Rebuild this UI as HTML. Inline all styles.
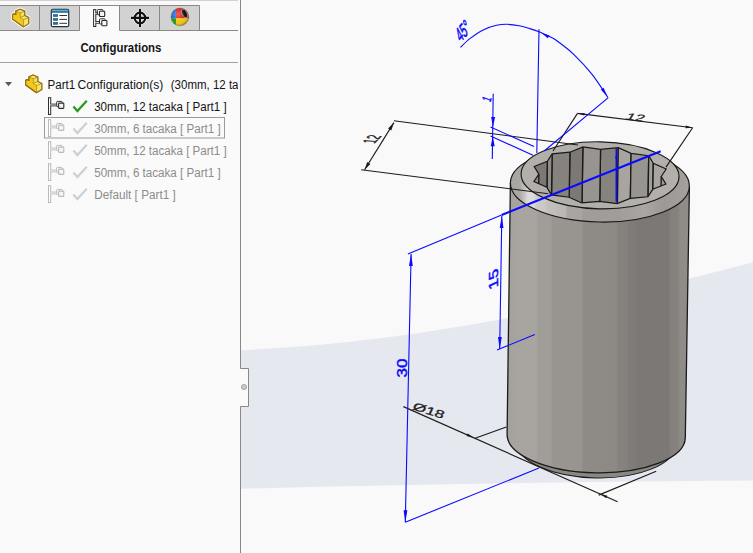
<!DOCTYPE html>
<html>
<head>
<meta charset="utf-8">
<title>Configurations</title>
<style>
html,body{margin:0;padding:0;width:753px;height:553px;overflow:hidden;background:#f9f9f9;}
body{position:relative;font-family:"Liberation Sans",sans-serif;}
#vp{position:absolute;left:0;top:0;width:753px;height:553px;}
#panel{position:absolute;left:0;top:0;width:240px;height:553px;background:#fafafa;}
#ui{position:absolute;left:0;top:0;width:753px;height:553px;}
text{font-family:"Liberation Sans",sans-serif;}
</style>
</head>
<body>
<!-- 3D viewport -->
<svg id="vp" width="753" height="553" viewBox="0 0 753 553">
  <defs>
    <linearGradient id="body" x1="507" y1="0" x2="689" y2="0" gradientUnits="userSpaceOnUse">
      <stop offset="0" stop-color="#a4a19d"/>
      <stop offset="0.03" stop-color="#a6a39f"/>
      <stop offset="0.08" stop-color="#a8a5a1"/>
      <stop offset="0.16" stop-color="#a8a5a1"/>
      <stop offset="0.17" stop-color="#a19e9a"/>
      <stop offset="0.24" stop-color="#a09d99"/>
      <stop offset="0.25" stop-color="#999692"/>
      <stop offset="0.41" stop-color="#989591"/>
      <stop offset="0.42" stop-color="#8f8c88"/>
      <stop offset="0.60" stop-color="#8d8a86"/>
      <stop offset="0.61" stop-color="#86837f"/>
      <stop offset="0.66" stop-color="#85827e"/>
      <stop offset="0.67" stop-color="#807d79"/>
      <stop offset="0.70" stop-color="#7f7c78"/>
      <stop offset="0.71" stop-color="#7b7875"/>
      <stop offset="0.89" stop-color="#7b7875"/>
      <stop offset="0.90" stop-color="#84817d"/>
      <stop offset="0.94" stop-color="#85827e"/>
      <stop offset="0.95" stop-color="#8f8c88"/>
      <stop offset="1" stop-color="#908d89"/>
    </linearGradient>
    <linearGradient id="chamfer" x1="510.5" y1="0" x2="689.5" y2="0" gradientUnits="userSpaceOnUse">
      <stop offset="0" stop-color="#a9a6a2"/>
      <stop offset="0.05" stop-color="#aaa7a3"/>
      <stop offset="0.075" stop-color="#c0bebb"/>
      <stop offset="0.10" stop-color="#dcdcdb"/>
      <stop offset="0.13" stop-color="#dcdcdb"/>
      <stop offset="0.15" stop-color="#cbcbcb"/>
      <stop offset="0.20" stop-color="#c8c8c7"/>
      <stop offset="0.21" stop-color="#c3c0bc"/>
      <stop offset="0.26" stop-color="#c1beba"/>
      <stop offset="0.27" stop-color="#bdbab6"/>
      <stop offset="0.31" stop-color="#bbb8b4"/>
      <stop offset="0.32" stop-color="#aaa7a3"/>
      <stop offset="0.40" stop-color="#a8a5a1"/>
      <stop offset="0.41" stop-color="#a19e9a"/>
      <stop offset="0.60" stop-color="#a09d99"/>
      <stop offset="0.75" stop-color="#aaa7a3"/>
      <stop offset="0.86" stop-color="#9d9a96"/>
      <stop offset="1" stop-color="#a5a29e"/>
    </linearGradient>
  </defs>
  <rect x="0" y="0" width="753" height="553" fill="#f9f9f9"/>
  <!-- floor band -->
  <path d="M241 350.2 C411.7 342.9 582.3 307.0 753 262.2 L753 480.5 Q520 482 241 488.7 Z" fill="#e6e8f0"/>
  <g id="model">
<ellipse cx="596.2" cy="443.5" rx="79.5" ry="34.4" transform="rotate(1.1 596.2 443.5)" fill="#8b8884" stroke="#1a1a1a" stroke-width="1"/>
<path d="M510.4 182.8 L507.1 434.3 A89.1 36.8 1.1 0 0 685.3 437.7 L689.4 186.2 A89.5 37.5 1.1 0 0 510.4 182.8 Z" fill="url(#body)"/>
<path d="M510.4 182.8 L507.1 434.3 A89.1 36.8 1.1 0 0 685.3 437.7 L689.4 186.2" fill="none" stroke="#1a1a1a" stroke-width="1.3"/>
<g transform="rotate(1.1 600 178)">
<ellipse cx="600.0" cy="184.5" rx="89.5" ry="37.5" fill="url(#chamfer)" stroke="#1a1a1a" stroke-width="1.2"/>
<ellipse cx="600.0" cy="175.3" rx="79.0" ry="33.5" fill="#b3b0ac" stroke="#1a1a1a" stroke-width="1.2"/>
<clipPath id="starclip"><polygon points="661.2,175.3 666.0,167.8 653.0,162.3 648.3,154.8 630.6,152.8 617.7,147.3 600.0,149.3 582.3,147.3 569.4,152.8 551.7,154.8 547.0,162.3 534.0,167.8 538.8,175.3 534.0,182.8 547.0,188.3 551.7,195.8 569.4,197.8 582.3,203.3 600.0,201.3 617.7,203.3 630.6,197.8 648.3,195.8 653.0,188.3 666.0,182.8"/></clipPath>
<polygon points="661.2,175.3 666.0,167.8 653.0,162.3 648.3,154.8 630.6,152.8 617.7,147.3 600.0,149.3 582.3,147.3 569.4,152.8 551.7,154.8 547.0,162.3 534.0,167.8 538.8,175.3 534.0,182.8 547.0,188.3 551.7,195.8 569.4,197.8 582.3,203.3 600.0,201.3 617.7,203.3 630.6,197.8 648.3,195.8 653.0,188.3 666.0,182.8" fill="#7c7976"/>
<g clip-path="url(#starclip)">
<polygon points="617.7,147.3 600.0,149.3 600.3,229.3 618.0,227.3" fill="#86837f"/>
<path d="M617.7 147.3 l0.3 80 M600.0 149.3 l0.3 80" stroke="#1a1a1a" stroke-width="1.35" fill="none"/>
<polygon points="600.0,149.3 582.3,147.3 582.6,227.3 600.3,229.3" fill="#989591"/>
<path d="M600.0 149.3 l0.3 80 M582.3 147.3 l0.3 80" stroke="#1a1a1a" stroke-width="1.35" fill="none"/>
<polygon points="630.6,152.8 617.7,147.3 618.0,227.3 630.9,232.8" fill="#a8a5a1"/>
<path d="M630.6 152.8 l0.3 80 M617.7 147.3 l0.3 80" stroke="#1a1a1a" stroke-width="1.35" fill="none"/>
<polygon points="582.3,147.3 569.4,152.8 569.7,232.8 582.6,227.3" fill="#7b7875"/>
<path d="M582.3 147.3 l0.3 80 M569.4 152.8 l0.3 80" stroke="#1a1a1a" stroke-width="1.35" fill="none"/>
<polygon points="648.3,154.8 630.6,152.8 630.9,232.8 648.6,234.8" fill="#989591"/>
<path d="M648.3 154.8 l0.3 80 M630.6 152.8 l0.3 80" stroke="#1a1a1a" stroke-width="1.35" fill="none"/>
<polygon points="569.4,152.8 551.7,154.8 552.0,234.8 569.7,232.8" fill="#86837f"/>
<path d="M569.4 152.8 l0.3 80 M551.7 154.8 l0.3 80" stroke="#1a1a1a" stroke-width="1.35" fill="none"/>
<polygon points="653.0,162.3 648.3,154.8 648.6,234.8 653.3,242.3" fill="#a29f9b"/>
<path d="M653.0 162.3 l0.3 80 M648.3 154.8 l0.3 80" stroke="#1a1a1a" stroke-width="1.35" fill="none"/>
<polygon points="551.7,154.8 547.0,162.3 547.3,242.3 552.0,234.8" fill="#908d89"/>
<path d="M551.7 154.8 l0.3 80 M547.0 162.3 l0.3 80" stroke="#1a1a1a" stroke-width="1.35" fill="none"/>
<polygon points="666.0,167.8 653.0,162.3 653.3,242.3 666.3,247.8" fill="#a8a5a1"/>
<path d="M666.0 167.8 l0.3 80 M653.0 162.3 l0.3 80" stroke="#1a1a1a" stroke-width="1.35" fill="none"/>
<polygon points="547.0,162.3 534.0,167.8 534.3,247.8 547.3,242.3" fill="#7b7875"/>
<path d="M547.0 162.3 l0.3 80 M534.0 167.8 l0.3 80" stroke="#1a1a1a" stroke-width="1.35" fill="none"/>
<polygon points="538.8,175.3 534.0,182.8 534.3,262.8 539.1,255.3" fill="#8f8c88"/>
<path d="M538.8 175.3 l0.3 80 M534.0 182.8 l0.3 80" stroke="#1a1a1a" stroke-width="1.35" fill="none"/>
<polygon points="666.0,182.8 661.2,175.3 661.5,255.3 666.3,262.8" fill="#a29f9b"/>
<path d="M666.0 182.8 l0.3 80 M661.2 175.3 l0.3 80" stroke="#1a1a1a" stroke-width="1.35" fill="none"/>
</g>
<polygon points="661.2,175.3 666.0,167.8 653.0,162.3 648.3,154.8 630.6,152.8 617.7,147.3 600.0,149.3 582.3,147.3 569.4,152.8 551.7,154.8 547.0,162.3 534.0,167.8 538.8,175.3 534.0,182.8 547.0,188.3 551.7,195.8 569.4,197.8 582.3,203.3 600.0,201.3 617.7,203.3 630.6,197.8 648.3,195.8 653.0,188.3 666.0,182.8" fill="none" stroke="#1a1a1a" stroke-width="1.2" stroke-linejoin="miter"/>
</g>
  </g>
  <g id="dims">
<g fill="none" stroke="#1c1c1c" stroke-width="1.15">
<path d="M393.9 120.7 L578 145"/>
<path d="M361.2 169.7 L548.3 193.7"/>
<path d="M393.9 122.6 L364.6 169.7"/>
<path d="M577.5 113.4 L553 151"/>
<path d="M577.5 113.4 L692.6 127.8"/>
<path d="M692.6 127.8 L666 167.1"/>
<path d="M403.4 406.6 L617.6 501.7"/>
<path d="M474.4 438.5 L506.3 427"/>
<path d="M598.7 495.1 L656.2 471.2"/>
</g>
<polygon points="393.9,122.6 391.3,130.4 388.1,128.4" fill="#1c1c1c"/>
<polygon points="364.6,169.7 367.2,161.9 370.4,163.9" fill="#1c1c1c"/>
<polygon points="577.5,113.4 584.6,113.0 584.3,115.6" fill="#1c1c1c"/>
<polygon points="692.6,127.8 685.5,128.2 685.8,125.6" fill="#1c1c1c"/>
<polygon points="474.4,438.0 466.5,436.0 467.6,433.5" fill="#1c1c1c"/>
<polygon points="599.5,493.7 607.4,495.7 606.3,498.2" fill="#1c1c1c"/>
<g fill="none" stroke="#0a0aff" stroke-width="1.1">
<path d="M460.4 47.4 C462.0 45.9 466.1 41.5 469.9 38.6 C473.7 35.7 478.8 32.1 483.2 29.9 C487.6 27.7 492.5 26.2 496.5 25.3 C500.5 24.4 503.3 24.2 507.1 24.3 C510.9 24.4 515.3 25.0 519.1 25.7 C522.9 26.4 526.4 27.6 529.7 28.6 C533.0 29.6 535.7 30.5 539.0 31.8 C542.3 33.1 546.7 35.2 549.6 36.6 C552.5 38.0 552.1 37.3 556.2 40.3 C560.3 43.3 568.2 49.1 574.2 54.8 C580.2 60.5 586.6 67.5 592.3 74.7 C597.9 81.9 605.5 94.0 608.1 97.8"/>
<path d="M539 29.3 L536.8 153"/>
<path d="M608 97.8 L544.2 151"/>
<path d="M493.2 93.8 L492.3 159"/>
<path d="M490.5 127 L534 146.5"/>
<path d="M490.5 136 L533 155.2"/>
<path d="M407.9 254 L501.6 215"/>
<path d="M616.3 148.5 L616.3 201.7" stroke-width="1.5"/>
<path d="M411.1 254 L405.3 522.2"/>
<path d="M501.8 216 L499.7 349"/>
<path d="M497 350 L534.8 334.5"/>
<path d="M405.3 522.2 L539 468"/>
</g>
<path d="M501.6 215 L660.7 151.2" fill="none" stroke="#0a0aff" stroke-width="2.15"/>
<polygon points="541.5,33.0 549.3,35.4 547.8,38.2" fill="#0a0aff"/>
<polygon points="607.6,97.0 600.8,89.5 603.6,87.7" fill="#0a0aff"/>
<polygon points="493.0,127.0 491.1,117.0 495.1,117.0" fill="#0a0aff"/>
<polygon points="492.8,136.3 494.7,146.3 490.7,146.3" fill="#0a0aff"/>
<polygon points="411.1,254.0 412.8,266.0 409.0,266.0" fill="#0a0aff"/>
<polygon points="405.3,522.2 403.6,510.2 407.4,510.2" fill="#0a0aff"/>
<polygon points="501.8,216.0 503.5,228.0 499.7,228.0" fill="#0a0aff"/>
<polygon points="499.7,349.0 498.0,337.0 501.8,337.0" fill="#0a0aff"/>
<polygon points="616.3,153.0 617.4,159.0 615.2,159.0" fill="#0a0aff"/>
<text transform="matrix(0.54,-0.645,0.67,1.27,460.5,42.8)" font-size="13" fill="#0a0aff" stroke="#0a0aff" stroke-width="0.45">45°</text>
<text transform="matrix(0.2,-0.6,1.01,0.37,490.3,102.5)" font-size="12" fill="#0a0aff" stroke="#0a0aff" stroke-width="0.45">1</text>
<text transform="matrix(0.555,-0.6,1.53,0.14,374.6,143.8)" font-size="12" fill="#1c1c1c" stroke="#1c1c1c" stroke-width="0.28">12</text>
<text transform="matrix(0.992,0.124,-0.46,0.76,624.8,119.3)" font-size="12" fill="#1c1c1c" stroke="#1c1c1c" stroke-width="0.28" textLength="18" lengthAdjust="spacingAndGlyphs">12</text>
<text transform="matrix(0,-1,1,0,407.1,377.5)" font-size="14" fill="#0a0aff" stroke="#0a0aff" stroke-width="0.45" textLength="18.8" lengthAdjust="spacingAndGlyphs">30</text>
<text transform="matrix(0,-1.26,0.94,-0.43,497.6,287)" font-size="14" fill="#0a0aff" stroke="#0a0aff" stroke-width="0.45">15</text>
<text transform="matrix(0.95,0.30,-0.38,0.85,411.8,409.2)" font-size="12" fill="#1c1c1c" stroke="#1c1c1c" stroke-width="0.28" textLength="32.5" lengthAdjust="spacingAndGlyphs">Ø18</text>
  </g>
</svg>

<!-- left panel -->
<div id="panel"></div>
<svg id="ui" width="753" height="553" viewBox="0 0 753 553">
<rect x="0" y="0" width="238" height="1" fill="#d2d2d2"/>
<rect x="0" y="5.5" width="79.5" height="25" fill="#d2d2d2"/>
<rect x="119.5" y="5.5" width="80" height="25" fill="#d2d2d2"/>
<g fill="none" stroke="#8b8784" stroke-width="1">
<path d="M0 5.5 H199.5 V30.5"/>
<path d="M0 30.5 H79.5 M119.5 30.5 H238"/>
<path d="M39.5 5.5 V30.5 M79.5 5.5 V30.5 M119.5 5.5 V30.5 M159.5 5.5 V30.5"/>
</g>
<rect x="0" y="62" width="238" height="1" fill="#a3a09e"/>
<path d="M240.5 0 V368.5 H248.5 V406.5 H240.5 V553" fill="none" stroke="#8b8784" stroke-width="1"/>
<rect x="241" y="369" width="7" height="37" fill="#fafafa"/>
<circle cx="244" cy="387" r="2.6" fill="#c9c9c9" stroke="#9a9a9a" stroke-width="0.8"/>
<defs>
<g id="part">
<path d="M15.8 10.9 L20 9.2 L24.7 11.1 V15.6 L28.7 17.5 V23.6 L23.3 26.9 L12.5 19.1 V14.4 L14.1 13.7 L15.8 14.5 Z" fill="#ffffff" stroke="#ffffff" stroke-width="3.2" stroke-linejoin="round" opacity="0.85"/>
<path d="M15.8 10.9 L20 9.2 L24.7 11.1 V15.6 L28.7 17.5 V23.6 L23.3 26.9 L12.5 19.1 V14.4 L14.1 13.7 L15.8 14.5 Z" fill="#f2c81e" stroke="#94700f" stroke-width="1.1" stroke-linejoin="round"/>
<path d="M15.8 10.9 L20 9.2 L24.7 11.1 L20.2 12.9 Z" fill="#f8e577"/>
<path d="M20.2 12.9 L24.7 11.1 V15.6 L20.2 17.6 Z" fill="#f5df5c"/>
<path d="M20.2 17.6 L24.7 15.6 L28.7 17.5 L23.6 19.7 Z" fill="#f6e36c"/>
<path d="M23.6 19.7 L28.7 17.5 V23.6 L23.4 26.8 Z" fill="#f7e569"/>
<path d="M15.8 10.9 L20.2 12.9 V17.6 L23.6 19.7 L23.4 26.6 M20.2 12.9 L24.7 11.1 M23.6 19.7 L28.7 17.5 M20.2 17.6 L24.7 15.6" fill="none" stroke="#a8820f" stroke-width="0.7"/>
<path d="M15.8 10.9 L20 9.2 L24.7 11.1 V15.6 L28.7 17.5 V23.6 L23.3 26.9 L12.5 19.1 V14.4 L14.1 13.7 L15.8 14.5 Z" fill="none" stroke="#94700f" stroke-width="1.1" stroke-linejoin="round"/>
</g>
<g id="cfg">
<rect x="48.5" y="97.7" width="2.2" height="16.8" fill="#ffffff" stroke-width="1"/>
<path d="M50.7 104.1 H57 M50.7 105.9 H58.5" fill="none" stroke-width="0.9"/>
<rect x="50.1" y="104.6" width="1.4" height="0.8" fill="#ffffff" stroke="none"/>
<rect x="56.7" y="101.4" width="5.4" height="5.2" rx="0.7" fill="#ffffff" stroke-width="1"/>
<rect x="58.6" y="103.1" width="5.2" height="5.3" rx="0.6" fill="#f4f4fc" stroke-width="1.1"/>
</g>
</defs>
<use href="#part"/>
<use href="#part" transform="translate(13.1,65.9)"/>
<rect x="51.3" y="9.3" width="17.4" height="17.4" rx="1.5" fill="#ffffff" stroke="#1c3345" stroke-width="1.2"/>
<rect x="51.9" y="9.9" width="16.2" height="3" fill="#2f7eaa"/>
<rect x="51.9" y="9.7" width="16.2" height="1" fill="#7fbde0"/>
<rect x="53.2" y="14.4" width="4.6" height="2.3" fill="#2a6f9b" stroke="#1c4a68" stroke-width="0.4"/>
<rect x="59.4" y="15.0" width="7.6" height="1" fill="#333"/>
<rect x="53.2" y="18.299999999999997" width="4.6" height="2.3" fill="#2a6f9b" stroke="#1c4a68" stroke-width="0.4"/>
<rect x="59.4" y="18.9" width="7.6" height="1" fill="#333"/>
<rect x="53.2" y="22.2" width="4.6" height="2.3" fill="#2a6f9b" stroke="#1c4a68" stroke-width="0.4"/>
<rect x="59.4" y="22.8" width="7.6" height="1" fill="#333"/>
<g stroke="#2b2b2b" fill="#ffffff">
<rect x="93.6" y="9.6" width="2.2" height="16.9" stroke-width="1"/>
<path d="M95.8 12.7 H98 M95.8 14.3 H99.3 M95.8 21.5 H99.3 M95.8 23.3 H101.5" fill="none" stroke-width="0.9"/>
<rect x="95.2" y="13.1" width="1.4" height="0.8" stroke="none"/><rect x="95.2" y="22" width="1.4" height="0.8" stroke="none"/>
<rect x="97.4" y="9.6" width="5.6" height="5.2" rx="0.8" stroke-width="1"/>
<rect x="99.5" y="11.3" width="5.2" height="5.2" rx="0.6" fill="#f4f4fc" stroke-width="1.1"/>
<rect x="99.5" y="18.8" width="5.6" height="5.2" rx="0.8" stroke-width="1"/>
<rect x="101.8" y="20.5" width="5.1" height="5.2" rx="0.6" fill="#f4f4fc" stroke-width="1.1"/>
</g>
<g fill="none" stroke="#ffffff" stroke-width="3.4" opacity="0.7"><circle cx="140" cy="17.9" r="5.4"/><path d="M131 17.9 H149 M140 8.9 V27"/></g>
<g fill="none" stroke="#111111" stroke-width="2.1"><circle cx="140" cy="17.9" r="5.3"/><path d="M131 17.9 H149 M140 8.9 V27"/></g>
<clipPath id="ballclip"><circle cx="179.9" cy="16.9" r="8.9"/></clipPath>
<radialGradient id="ballsh" cx="0.4" cy="0.35" r="0.7"><stop offset="0" stop-color="#fff" stop-opacity="0.35"/><stop offset="0.6" stop-color="#fff" stop-opacity="0"/><stop offset="1" stop-color="#000" stop-opacity="0.45"/></radialGradient>
<g clip-path="url(#ballclip)">
<rect x="170" y="7" width="6" height="11.3" fill="#2565d2"/>
<rect x="176" y="7" width="14" height="11.3" fill="#d81512"/>
<rect x="170" y="18.3" width="6" height="9" fill="#179c22"/>
<rect x="176" y="18.3" width="14" height="9" fill="#efc70a"/>
<ellipse cx="184.6" cy="13.5" rx="2.4" ry="4.7" transform="rotate(-28 184.6 13.5)" fill="#111" stroke="#f3d9d6" stroke-width="0.5"/>
<circle cx="179.9" cy="16.9" r="8.9" fill="url(#ballsh)"/>
</g>
<circle cx="179.9" cy="16.9" r="8.9" fill="none" stroke="#6b5a2a" stroke-width="0.6" opacity="0.7"/>
<path d="M5 82 H12 L8.5 86.3 Z" fill="#5a5a5a"/>
<use href="#cfg" transform="translate(0,0)" stroke="#2e2e2e"/>
<path d="M73.4 106.6 L77.4 111 L86.8 100.8" fill="none" stroke="#2a9a1a" stroke-width="2.3"/>
<use href="#cfg" transform="translate(0,22)" stroke="#b9b9b9"/>
<path d="M73.4 128.6 L77.4 133 L86.8 122.8" fill="none" stroke="#d0d0d0" stroke-width="2.3"/>
<use href="#cfg" transform="translate(0,44)" stroke="#b9b9b9"/>
<path d="M73.4 150.6 L77.4 155 L86.8 144.8" fill="none" stroke="#d0d0d0" stroke-width="2.3"/>
<use href="#cfg" transform="translate(0,66)" stroke="#b9b9b9"/>
<path d="M73.4 172.6 L77.4 177 L86.8 166.8" fill="none" stroke="#d0d0d0" stroke-width="2.3"/>
<use href="#cfg" transform="translate(0,88)" stroke="#b9b9b9"/>
<path d="M73.4 194.6 L77.4 199 L86.8 188.8" fill="none" stroke="#d0d0d0" stroke-width="2.3"/>
<rect x="44.5" y="117.5" width="180" height="20.5" fill="none" stroke="#9a9a9a" stroke-width="1"/>
<text x="80.4" y="52.4" font-size="12" font-weight="bold" fill="#141414" textLength="81" lengthAdjust="spacingAndGlyphs">Configurations</text>
<clipPath id="pclip"><rect x="0" y="0" width="238" height="553"/></clipPath>
<text x="47.6" y="89.1" font-size="12" fill="#141414" textLength="27.7" lengthAdjust="spacingAndGlyphs">Part1</text>
<text x="77.5" y="89.1" font-size="12" fill="#141414" textLength="85.8" lengthAdjust="spacingAndGlyphs">Configuration(s)</text>
<g clip-path="url(#pclip)"><text x="170.8" y="89.1" font-size="12" fill="#141414" textLength="92" lengthAdjust="spacingAndGlyphs">(30mm, 12 tacaka</text></g>
<text x="94.2" y="110.5" font-size="12" fill="#141414" textLength="132.5" lengthAdjust="spacingAndGlyphs">30mm, 12 tacaka [ Part1 ]</text>
<text x="94.2" y="132.6" font-size="12" fill="#8c8c8c" textLength="126.5" lengthAdjust="spacingAndGlyphs">30mm, 6 tacaka [ Part1 ]</text>
<text x="94.2" y="154.6" font-size="12" fill="#8c8c8c" textLength="132.5" lengthAdjust="spacingAndGlyphs">50mm, 12 tacaka [ Part1 ]</text>
<text x="94.2" y="176.5" font-size="12" fill="#8c8c8c" textLength="126.5" lengthAdjust="spacingAndGlyphs">50mm, 6 tacaka [ Part1 ]</text>
<text x="94.2" y="198.5" font-size="12" fill="#8c8c8c" textLength="81.5" lengthAdjust="spacingAndGlyphs">Default [ Part1 ]</text>
</svg>
</body>
</html>
